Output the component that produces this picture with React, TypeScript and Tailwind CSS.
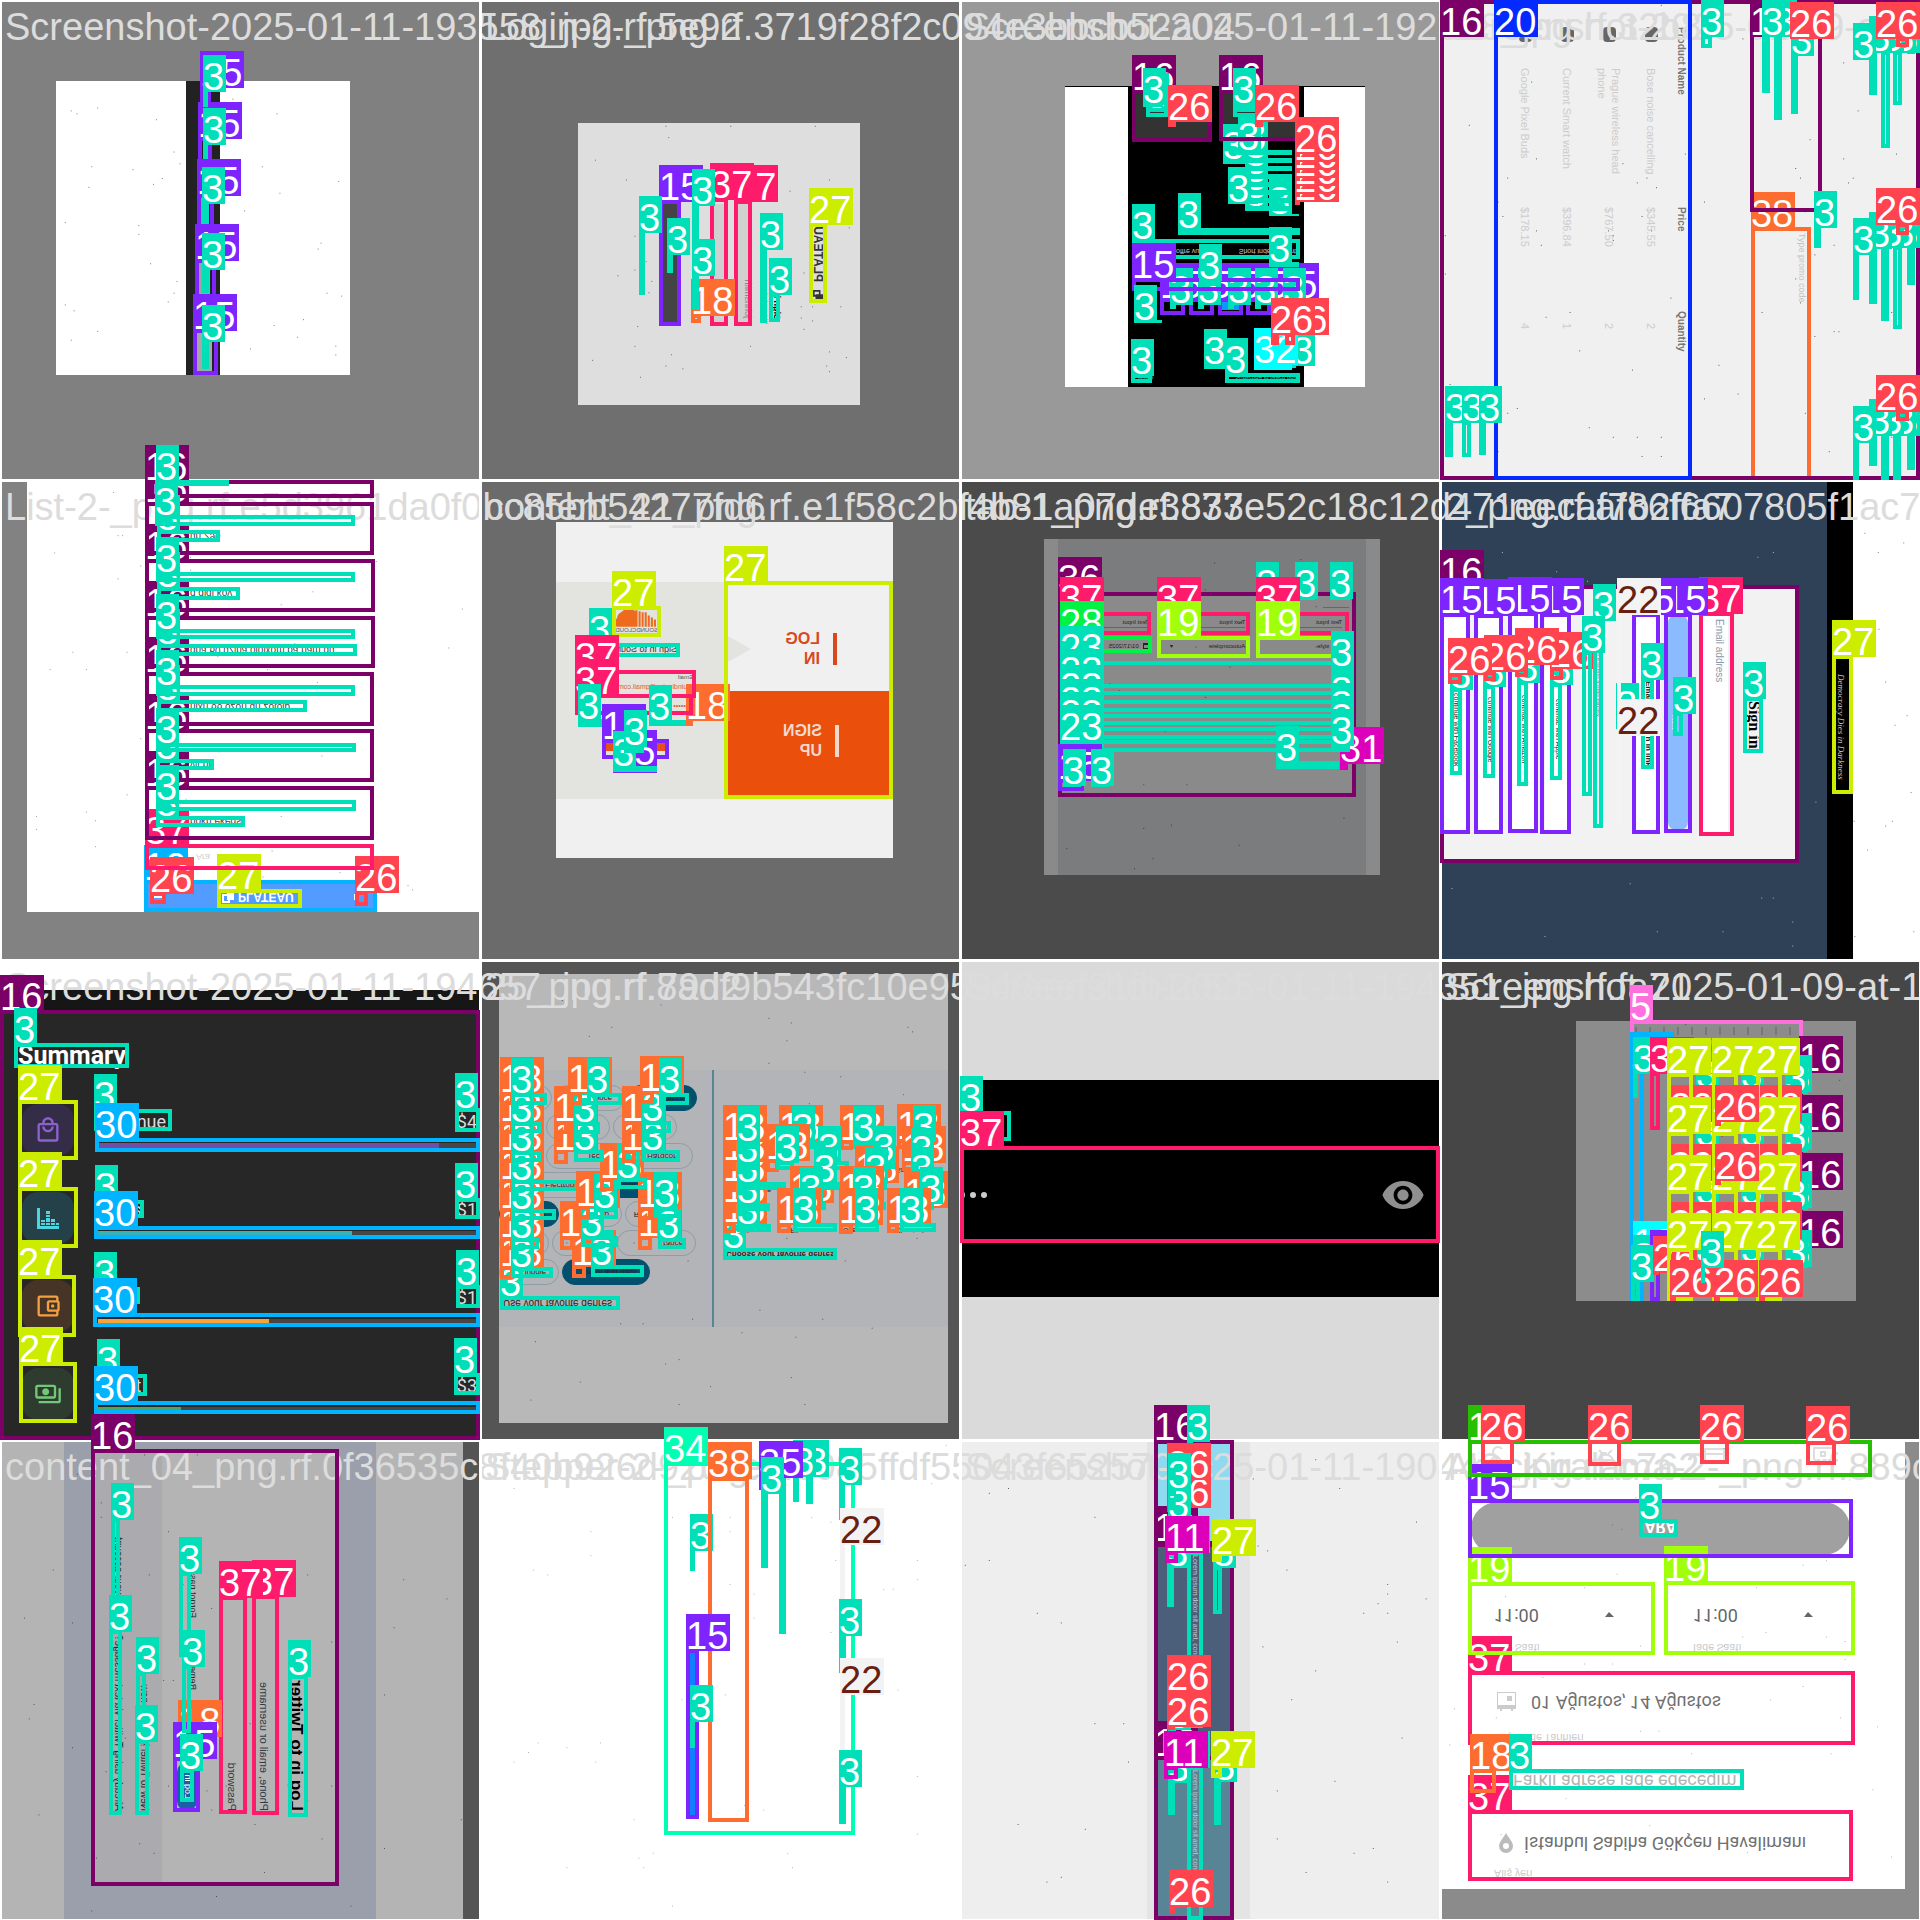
import type { ReactNode } from "react";
import {
  MdOutlineAccountBalanceWallet,
  MdOutlineLocalMall,
  MdOutlinePayments,
} from "react-icons/md";

type Box = [cls: number, x: number, y: number, w: number, h: number];

const TILE = 480;
const pct = (v: number) => `${(v / TILE) * 100}%`;

const FILL = [
  "bg-[#042aff]", "bg-[#0bdbeb]", "bg-[#f3f3f3]", "bg-[#00dfb7]", "bg-[#111f68]",
  "bg-[#ff6fdd]", "bg-[#ff444f]", "bg-[#cced00]", "bg-[#00f344]", "bg-[#bd00ff]",
  "bg-[#00b4ff]", "bg-[#dd00ba]", "bg-[#00ffff]", "bg-[#26c000]", "bg-[#01ffb3]",
  "bg-[#7d24ff]", "bg-[#7b0068]", "bg-[#ff1b6c]", "bg-[#fc6d2f]", "bg-[#a2ff0b]",
];
const LINE = [
  "border-[#042aff]", "border-[#0bdbeb]", "border-[#f3f3f3]", "border-[#00dfb7]", "border-[#111f68]",
  "border-[#ff6fdd]", "border-[#ff444f]", "border-[#cced00]", "border-[#00f344]", "border-[#bd00ff]",
  "border-[#00b4ff]", "border-[#dd00ba]", "border-[#00ffff]", "border-[#26c000]", "border-[#01ffb3]",
  "border-[#7d24ff]", "border-[#7b0068]", "border-[#ff1b6c]", "border-[#fc6d2f]", "border-[#a2ff0b]",
];

/** Sensor-like specks scattered over a picture. */
function Specks({ seed, n = 26, c = "fill-black/50" }: { seed: number; n?: number; c?: string }) {
  let s = seed * 7919 + 13;
  const next = () => {
    s = (s * 1103515245 + 12345) % 2147483648;
    return s / 2147483648;
  };
  const dots = Array.from({ length: n }, () => [Math.round(next() * 98), Math.round(next() * 98)]);
  return (
    <svg aria-hidden className={`pointer-events-none absolute inset-0 size-full ${c}`}>
      {dots.map(([a, b], i) => (
        <rect key={i} x={`${a}%`} y={`${b}%`} width="1" height="1" />
      ))}
    </svg>
  );
}

function PlateauMark({ c }: { c: string }) {
  return (
    <svg viewBox="0 0 12 12" className={c} fill="currentColor" aria-hidden>
      <path d="M0 0h8v3h4v9H5V9H0z M2 2v5h3V3h1V2z" fillRule="evenodd" />
    </svg>
  );
}

/* ---------- pictures ---------- */

const P1 = () => (
  <div className="h-full bg-[#808080] pt-[81px] pl-[56px]">
    <div className="relative h-[294px] w-[294px] bg-white">
      <Specks seed={1} n={44} />
      <div className="relative ml-[130px] flex h-full w-[34px] flex-col items-center bg-[#222222] pt-[117px]">
        <div className="h-7 w-[10px] bg-[#999999]" />
        <div className="mt-[37px] h-[31px] w-[13px] bg-[#a0a0a0]" />
        <div className="mt-[39px] h-[38px] w-[17px] bg-[#a6a6a6]" />
      </div>
    </div>
  </div>
);

const P2 = () => (
  <div className="h-full bg-[#6f6f6f] pt-[123px] pl-[98px]">
    <div className="relative size-[282px] bg-[#dedede]">
      <Specks seed={3} n={40} />
      <div className="size-full -scale-y-100 pt-[81px] pr-[36px] leading-none [writing-mode:vertical-rl]">
        <h3 className="flex w-3 items-center gap-2 pt-6 text-[12px] font-bold text-[#333333]">
          <PlateauMark c="size-[10px] -rotate-90" />
          PLATEAU
        </h3>
        <h4 className="mr-[31px] w-[10px] pt-1 text-[9px] font-bold text-black">Sign in to</h4>
        <p className="mr-[3px] w-[6px] text-[5px] text-[#888888]">Welcome back</p>
        <p className="mr-[10px] h-[120px] w-[14px] bg-[#d0d0d0] pt-[6px] text-[9px] text-[#888888]">johnsmith</p>
        <p className="mr-[10px] h-[120px] w-[14px] bg-[#d0d0d0]" />
        <button type="button" aria-label="Sign in" className="mr-[33px] h-[122px] w-[18px] bg-[#444444]" />
      </div>
    </div>
  </div>
);

const P3 = () => (
  <div className="h-full bg-[#999999] pt-[86px] pl-[105px]">
    <div className="h-[301px] w-[300px] border-t border-black bg-white pl-[63px]">
      <div className="h-full w-[176px] bg-black">
        <div className="flex gap-3 px-1.5 pt-[5px]">
          <div className="h-12 w-[76px] bg-[#333333]" />
          <div className="h-12 w-[76px] bg-[#333333]" />
        </div>
        <p className="mt-[105px] flex h-[10px] -scale-y-100 justify-between gap-4 pr-2 pl-[48px] text-[7px] leading-none whitespace-nowrap text-[#cccccc]">
          <span>offre vue</span>
          <span>Short independent</span>
        </p>
        <div className="mt-[46px] ml-[93px] h-[9px] w-[18px] bg-[#0a9aff]" />
        <p className="mt-[65px] flex -scale-y-100 justify-between px-1.5 text-[6px] leading-none text-[#00dfb7]">
          <span>Fidélité</span>
          <span>Subscribe to reach now</span>
        </p>
      </div>
    </div>
  </div>
);

const GOODS = [
  ["Bose noise cancelling", "$345.55", "2"],
  ["Prague wireless head phone", "$767.50", "2"],
  ["Current Smart watch", "$396.84", "1"],
  ["Google Pixel Buds", "$178.15", "4"],
];

const P4 = () => (
  <div className="relative flex h-full flex-row-reverse bg-[#f0f0f0] pt-[27px]">
    <Specks seed={5} n={70} c="fill-black/60" />
    <label className="mt-[206px] w-[124px] pr-[114px] text-[9px] leading-none whitespace-nowrap text-[#c4c4c4] [writing-mode:vertical-rl]">
      Type promo code
    </label>
    <div className="mr-[106px] w-[190px] [writing-mode:vertical-rl]">
      <table className="text-left text-[11px] text-[#cccccc]">
        <thead className="text-[10px] text-[#777777]">
          <tr className="w-[18px]">
            <th className="h-[180px] font-bold whitespace-nowrap" colSpan={2}>Product Name</th>
            <th className="h-[104px] font-bold">Price</th>
            <th className="h-[90px] font-bold">Quantity</th>
          </tr>
        </thead>
        <tbody>
          {GOODS.map(([name, price, n]) => (
            <tr key={name} className="w-[42px]">
              <td className="h-[41px]"><div className="h-[15px] w-[13px] rounded-sm bg-[#666666]" /></td>
              <td className="h-[139px]"><div className="h-[110px] leading-[14px]">{name}</div></td>
              <td>{price}</td>
              <td className="pt-[12px]">{n}</td>
            </tr>
          ))}
        </tbody>
      </table>
    </div>
  </div>
);

const LIST = [
  "nokn ekeds", "vit bi", "nixn 66 ozon un zotoib",
  "dna 60 uzina ololxom pa nam du", "g qiqi kov", "un 296",
];

const P5 = () => (
  <div className="h-full bg-[#828282] pl-[27px]">
    <div className="relative h-[432px] -scale-y-100 bg-white">
      <Specks seed={6} n={50} c="fill-black/40" />
      <div className="ml-[119px] w-[229px] leading-none">
        <header className="flex h-[30px] items-center bg-[#529bff] px-2 text-[12px] font-bold text-white">
          <span className="h-[3px] w-2 bg-white" />
          <PlateauMark c="mr-1 ml-[60px] size-3" />
          PLATEAU
          <span className="mr-2 ml-auto h-[6px] w-[5px] bg-white" />
        </header>
        <p className="h-[42px] pt-[21px] pl-[50px] text-[9px] text-[#cccccc]">Ara</p>
        <ul>
          {LIST.map((s) => (
            <li key={s} className="h-[57px] pt-[14px] pl-[44px] text-[10px] text-[#444444]">
              {s}
              <div className="mt-2 mr-6 border-t border-dotted border-[#bbbbbb]" />
            </li>
          ))}
        </ul>
      </div>
    </div>
  </div>
);

const P6 = () => (
  <div className="h-full bg-[#6b6b6b] pt-[42px] pl-[76px]">
    <div className="h-[336px] w-[337px] -scale-x-100 bg-[#f0f0f0] pt-[60px]">
      <div className="flex h-[217px] leading-none">
        <div className="flex w-[166px] flex-col text-[16px] leading-5 font-bold">
          <div className="flex h-[109px] items-center gap-[13px] pt-6 pl-[56px] text-[#d9481c]">
            <span className="h-8 w-1 bg-[#d9481c]" />
            <span className="w-[56px]">LOG<br />IN</span>
            <svg viewBox="0 0 23 26" className="h-[26px] w-[23px] shrink-0 fill-[#e3e3df]" aria-hidden><path d="M23 0L0 13L23 26z" /></svg>
          </div>
          <div className="flex flex-1 items-center gap-[13px] bg-[#ea4f0c] pb-2 pl-[54px] text-[#f3d8cc]">
            <span className="h-8 w-1 bg-[#f3d8cc]" />
            <span>SIGN<br />UP</span>
          </div>
        </div>
        <form className="flex-1 bg-[#e3e3df] pt-[27px] pl-[34px] text-[#555555]">
          <svg viewBox="0 0 42 17" className="ml-[35px] h-[18px] w-[43px] -scale-x-100 fill-[#ee6a1d]" aria-hidden>
            <path d="M20 17H4a4 4 0 01-2-8 7 7 0 014-6 10 10 0 0114-1z M20 1h2v16h-2z M23 2h2v15h-2z M26 3h2v14h-2z M29 3h2v14h-2z M32 6h2v11h-2z M35 8h2v9h-2z M38 10h2v7h-2z" />
          </svg>
          <p className="ml-[35px] text-[6px]">SOUNDCLOUD</p>
          <p className="mt-[12px] ml-[16px] text-[9px] whitespace-nowrap text-[#333333]">Sign in to Soun</p>
          <label htmlFor="sc-email" className="mt-5 block text-[6px]">Email</label>
          <input id="sc-email" readOnly defaultValue="thuindicator@gmail.com" className="mt-0.5 block h-2 w-24 bg-transparent text-[7px] leading-none text-[#d9603c]" />
          <p className="mt-3 text-[7px] text-[#d9603c]">••••••••</p>
          <button type="button" aria-label="Sign in" className="mt-[30px] ml-[28px] block h-3 w-[59px] bg-[#e8501a]" />
        </form>
      </div>
    </div>
  </div>
);

const P7 = () => (
  <div className="h-full bg-[#4b4b4b] pt-[59px] pl-[84px]">
    <div className="size-[336px] -scale-x-100 bg-[#8a8a8a] px-[14px]">
      <div className="relative h-full bg-[#7b7c7e] pt-[53px] pl-[10px]">
        <Specks seed={8} n={30} />
        <div className="h-[205px] bg-[#8a8a8a] px-[7px] pt-[15px] text-[6px] leading-none text-[#222222]">
          <div className="h-[5px] w-[26px] border-t border-[#62666e]" />
          <div className="grid grid-cols-3 gap-x-1.5">
            {["a", "b", "c"].map((k) => (
              <p key={k} className="h-[23px] pt-[7px] pl-[7px]">
                Text Input
                <span className="mt-0.5 mr-3 block border-t border-[#666666]" />
              </p>
            ))}
            <p className="flex pt-2 pl-[7px]">Text style</p>
            <p className="flex justify-between pt-2 pr-2 pl-[7px]">Autocomplete <span>▾</span></p>
            <p className="flex gap-1 pt-2 pl-[7px]">
              <span className="size-[6px] border border-t-2 border-[#222222]" />
              01/17/2025
            </p>
          </div>
        </div>
      </div>
    </div>
  </div>
);

const PROVIDERS = ["Apple", "Amazon", "Google", "Facebook"];

const P8 = () => (
  <div className="flex h-full">
    <div className="relative w-[387px] bg-[#2f4157] pt-[109px]">
      <Specks seed={9} n={40} c="fill-white/60" />
      <div className="relative h-[272px] w-[357px] bg-[#f2f2f3] pt-[26px] pr-[35px] leading-none [writing-mode:vertical-rl]">
        <h3 className="w-[18px] pt-[86px] font-['Liberation_Serif'] text-[16px] font-bold text-black">Sign in</h3>
        <label className="mr-[16px] block h-[217px] w-[27px] bg-white pt-1 pr-[4px] text-[10px] text-[#8d96a8]">Email address</label>
        <button type="button" className="mr-[13px] block h-[215px] w-[20px] rounded-lg bg-[#8bbaff] pr-2 text-[7px] text-white">Next</button>
        <button type="button" className="mr-[7px] block h-[217px] w-[27px] bg-white text-[8px] font-bold text-[#222222]">Email me a sign in link</button>
        <p className="mr-[34px] w-[6px] text-[4px] text-[#666666]">By signing in you agree to our terms of service and policy</p>
        <div className="mr-[22px] flex w-[130px] flex-col gap-[7px]">
          {PROVIDERS.map((p) => (
            <button key={p} type="button" className="block h-[217px] w-[27px] bg-white pt-3 text-[7px] text-[#222222]">continue with {p}</button>
          ))}
        </div>
      </div>
    </div>
    <div className="w-[26px] bg-black pt-[194px] pr-[8px] font-['Liberation_Serif'] text-[9px] leading-none text-[#cccccc] italic [writing-mode:vertical-rl]">
      Democracy Dies in Darkness
    </div>
    <div className="relative flex-1 bg-white"><Specks seed={10} n={14} /></div>
  </div>
);

const SUMMARY = [
  { name: "Revenue", value: "$4", tone: "bg-[#332d48] text-[#8d62cf]", bar: "bg-[#7050a5] w-[90%]", icon: <MdOutlineLocalMall className="size-7" /> },
  {
    name: "Sales", value: "$1", tone: "bg-[#24414a] text-[#4fd3de]", bar: "bg-[#36b3b9] w-[67%]",
    icon: (
      <svg viewBox="0 0 24 24" className="size-6" fill="currentColor" aria-hidden>
        <path d="M1 2h3v18h19v3H1z M5 14h4v2H5z M5 17h4v2H5z M10 9h4v2h-4z M10 12h4v4h-4z M10 17h4v2h-4z M15 13h4v3h-4z M15 17h4v2h-4z M20 17h3v2h-3z M10 5h4v3h-4z" />
      </svg>
    ),
  },
  { name: "Cost", value: "$1", tone: "bg-[#463526] text-[#f5a040]", bar: "bg-[#f5a33c] w-[45%]", icon: <MdOutlineAccountBalanceWallet className="size-7" /> },
  { name: "Profit", value: "$3", tone: "bg-[#2d3c2e] text-[#74c778]", bar: "bg-[#54a35c] w-[22%]", icon: <MdOutlinePayments className="size-7" /> },
];

const P9 = () => (
  <div className="h-full bg-[#272727] font-[Roboto] text-[#dddddd]">
    <div className="h-[30px] bg-white" />
    <div className="h-5 bg-[#161616]" />
    <h3 className="h-[94px] pt-[34px] pl-[18px] text-[25px] leading-6 font-bold text-white">Summary</h3>
    <ul>
      {SUMMARY.map((s) => (
        <li key={s.name} className="flex h-[88px] gap-6 pr-[3px] pl-[22px]">
          <div className={`grid size-[52px] place-items-center rounded-2xl ${s.tone}`}>{s.icon}</div>
          <div className="flex-1 pt-[7px]">
            <div className="flex h-8 justify-between text-[18px] leading-[22px]">
              <span>{s.name}</span>
              <span>{s.value}</span>
            </div>
            <div className="h-[5px] bg-[#464646]"><div className={`h-full ${s.bar}`} /></div>
          </div>
        </li>
      ))}
    </ul>
  </div>
);

const DARK = "bg-[#024f6e] border-[#024f6e]";
const PILLS: { t: string; w: string; dark?: boolean }[][] = [
  [{ t: "Jungle", w: "w-[60px]" }, { t: "Drum and bass", w: "w-[88px]", dark: true }],
  [{ t: "House", w: "w-[50px]" }, { t: "Dub", w: "w-[62px]" }, { t: "Trance", w: "w-[79px]" }],
  [{ t: "Metal", w: "w-[60px]", dark: true }, { t: "Rap", w: "w-[60px]" }, { t: "Rock", w: "w-[40px]" }],
  [{ t: "Electronic", w: "w-[94px]" }, { t: "Ambient", w: "w-[62px]", dark: true }],
  [{ t: "Pop", w: "w-[44px]" }, { t: "Techno", w: "w-[80px]" }, { t: "Hardcore", w: "w-[64px]" }],
  [{ t: "Folk", w: "w-[44px]" }, { t: "Jazz", w: "w-[64px]" }, { t: "Soul", w: "w-[64px]" }],
  [{ t: "Blues", w: "w-[53px]" }, { t: "Dance", w: "w-[70px]" }, { t: "Disco", w: "w-[69px]", dark: true }],
];
const GENRES = ["Action", "Film score", "Opera", "Classical", "Country", "Latin", "Indie", "Punk", "Alternative", "Gospel", "Swing", "Ska", "Reggae", "Funk", "Choir", "Samba"];

const P10 = () => (
  <div className="h-full bg-[#555555] pt-[14px] pr-3 pl-[19px]">
    <div className="relative h-[449px] -scale-y-100 bg-[#b8b8b8] pt-[96px] leading-none text-[#222222]">
      <Specks seed={12} n={60} />
      <div className="flex h-[257px] bg-[#b2b4b7]">
        <div className="w-[213px]">
          <h4 className="h-[42px] pt-[19px] pl-1 text-[10px]">Use your favorite genres</h4>
          {PILLS.map((r, i) => (
            <div key={i} className="mb-[3px] flex gap-[3px]">
              {r.map((p) => (
                <span key={p.t} className={`h-[26px] rounded-full border pt-2 pr-3 text-right text-[8px] ${p.w} ${p.dark ? DARK : "border-[#8e9da6]"}`}>{p.t}</span>
              ))}
            </div>
          ))}
        </div>
        <div className="w-0.5 bg-[#5c8390]" />
        <div className="flex-1 pt-[69px]">
          <h4 className="pl-3 text-[8px] font-bold">Choose your favorite genres</h4>
          <div className="mt-4 grid grid-cols-4 gap-y-[13px] pl-6 text-[7px]">
            {GENRES.map((g) => <span key={g}>{g}</span>)}
          </div>
        </div>
      </div>
    </div>
  </div>
);

const P11 = () => (
  <div className="h-full bg-[#dadada] pt-[120px]">
    <div className="flex h-[217px] items-center justify-between bg-black pt-3 pr-[15px] pl-[1px]">
      <span className="flex gap-[5px]">
        <i className="h-1.5 w-1 rounded-full bg-[#bbbbbb]" />
        <i className="size-1.5 rounded-full bg-[#cccccc]" />
        <i className="size-1.5 rounded-full bg-[#cccccc]" />
      </span>
      <button type="button" aria-label="Show password">
        <svg viewBox="1 4 22 16" className="h-[30px] w-11 fill-[#8f8f8f]" aria-hidden>
          <path d="M12 4.500C7 4.500 2.730 7.610 1 12c1.730 4.390 6 7.500 11 7.500s9.270-3.110 11-7.500c-1.730-4.390-6-7.500-11-7.500zM12 17c-2.760 0-5-2.240-5-5s2.240-5 5-5 5 2.240 5 5-2.240 5-5 5zm0-8c-1.660 0-3 1.340-3 3s1.340 3 3 3 3-1.340 3-3-1.340-3-3-3z" />
        </svg>
      </button>
    </div>
  </div>
);

const P12 = () => (
  <div className="h-full bg-[#464646] pt-[61px] pl-[136px]">
    <div className="relative flex size-[280px] gap-[12px] bg-[#8c8c8c] pt-[6px] pl-[59px]">
      <Specks seed={14} n={10} />
      {Array.from({ length: 12 }, (_, i) => (
        <span key={i} className="h-2 w-0.5 bg-[#777777]" />
      ))}
    </div>
  </div>
);

const P13 = () => (
  <div className="relative flex h-full bg-[#b4b4b4]">
    <div className="w-16" />
    <div className="w-[312px] bg-[#9a9fab] pt-[11px] pl-[29px]">
      <div className="h-[433px] w-[244px] -scale-y-100 bg-[linear-gradient(to_right,#aaaaaf_69px,#b4b4b4_69px)] pt-[73px] pr-[32px] leading-none [writing-mode:vertical-rl]">
        <h3 className="w-[18px] text-[17px] font-bold whitespace-nowrap text-black">Log in to Twitter</h3>
        <label className="mr-[11px] block w-[24px] pr-[7px] text-[11px] whitespace-nowrap text-[#333a45]">Phone, email or username</label>
        <label className="mr-[8px] block w-[24px] pr-[7px] text-[11px] whitespace-nowrap text-[#333a45]">Password</label>
        <div className="mr-[23px] flex h-[260px] w-[20px] gap-3 text-[9px] whitespace-nowrap text-[#113333]">
          <button type="button" className="h-[52px] w-[20px] rounded-full bg-[#1c5ea8] text-white">Log in</button>
          <span className="pt-[60px]">Remember me</span>
          <span>Forgot password</span>
        </div>
        <p className="mr-[28px] w-[13px] text-[10px] whitespace-nowrap text-[#113333]">New to Twitter? Sign up now</p>
        <p className="mr-[13px] w-[12px] text-[10px] whitespace-nowrap text-[#113333]">Already using Twitter via text message? Activate your account</p>
      </div>
    </div>
    <div className="flex-1" />
    <div className="w-[17px] bg-[#545454]" />
    <Specks seed={15} n={60} />
  </div>
);

const P14 = () => (
  <div className="relative h-full bg-white pt-[212px] pl-[208px]">
    <Specks seed={16} n={50} c="fill-black/30" />
    <div className="h-[165px] w-[9px] bg-[#0f80ff]" />
  </div>
);

const P15 = () => (
  <div className="relative h-full bg-[#eeeeee] pl-[187px]">
    <Specks seed={17} n={60} c="fill-black/60" />
    <div className="relative flex h-full w-[103px] flex-col bg-[#e4e4e5] pr-[18px] pl-[9px] text-[7px] leading-[7px] text-[#c2c8cf]">
      <div className="h-[105px] bg-[#8fdaee]" />
      <p className="h-[215px] bg-[#4c5f7a] pt-[10px] pr-[33px] [writing-mode:vertical-rl]">Lorem ipsum dolor sit amet, consectetur adipiscing</p>
      <p className="flex-1 bg-[#588595] pt-[10px] pr-[33px] [writing-mode:vertical-rl]">Lorem ipsum dolor sit amet, consectetur</p>
    </div>
  </div>
);

const P16 = () => (
  <div className="h-full bg-[#8b8b8b] pr-[15px]">
    <form className="relative flex h-[449px] -scale-y-100 flex-col bg-white pt-[10px] pl-[54px] font-[Roboto] text-[11px] leading-3 text-[#cccccc]">
      <Specks seed={18} n={50} c="fill-black/30" />
      <label htmlFor="place">Alış yeri</label>
      <div className="mt-3 flex h-6 items-center gap-[11px] pl-[5px]">
        <svg viewBox="0 0 14 20" className="h-5 w-[14px] fill-[#bbbbbb]" fillRule="evenodd" aria-hidden>
          <path d="M7 20C5 16 0 11 0 7a7 7 0 0114 0C14 11 9 16 7 20z M7 10a3 3 0 000-6a3 3 0 000 6z" />
        </svg>
        <input id="place" readOnly defaultValue="İstanbul Sabiha Gökçen Havalimanı" className="h-6 w-80 bg-transparent text-[18px] leading-6 text-[#707070]" />
      </div>
      <label className="mt-[38px] flex h-6 items-center pl-[19px] text-[18px] leading-6 text-[#b4b4b4]">Farklı adrese iade edeceğim</label>
      <label htmlFor="dates" className="mt-[26px]">Alış - İade Tarihleri</label>
      <div className="mt-[17px] flex h-6 items-center gap-[15px] pl-[3px]">
        <svg viewBox="0 0 19 19" className="size-[19px] fill-[#cccccc]" aria-hidden>
          <path d="M0 2h3V0h2v2h9V0h2v2h3v17H0z M1 6v12h17V6z M10 10h5v5h-5z" fillRule="evenodd" />
        </svg>
        <input id="dates" readOnly defaultValue="01 Ağustos, 14 Ağustos" className="h-6 w-64 bg-transparent text-[18px] leading-6 text-[#707070]" />
      </div>
      <div className="mt-[37px] flex gap-[79px]">
        {["Alış Saati", "İade Saati"].map((s) => (
          <div key={s} className="w-[120px]">
            <label htmlFor={s}>{s}</label>
            <div className="mt-[14px] flex h-6 items-center justify-between text-[#666666]">
              <select id={s} className="h-6 w-20 appearance-none bg-transparent text-[18px] leading-6"><option>11:00</option></select>
              <svg viewBox="0 0 9 5" className="h-[5px] w-[9px]" fill="currentColor" aria-hidden><path d="M0 0h9L4 5z" /></svg>
            </div>
          </div>
        ))}
      </div>
      <button type="button" className="mt-12 -ml-[23px] h-[53px] w-[379px] rounded-full bg-[#a0a0a0] pt-[2px] text-[16px] font-bold text-white">ARA</button>
      <nav className="mt-[38px] -ml-2 flex gap-[88px]">
        {["M3 2l6 6M9 8a5 5 0 107 7M16 3l-5 5", "M3 4a8 8 0 0015 0M4 14l4-4M17 14l-4-4", "M1 2h19v13H1zM1 10h19", "M1 16h19V5l-6-4H7L1 5zM8 8h4v4H8z"].map((d) => (
          <svg key={d} viewBox="0 0 21 18" className="h-[18px] w-[21px] fill-none stroke-[#dddddd]" strokeWidth="2" aria-hidden><path d={d} /></svg>
        ))}
      </nav>
    </form>
  </div>
);

/* ---------- annotations ---------- */

const row = (cls: number, ys: number[], x: number, w: number, h: number): Box[] =>
  ys.map((y) => [cls, x, y, w, h]);

const TILES: { name: string; Pic: () => ReactNode; boxes: Box[] }[] = [
  {
    name: "Screenshot-2025-01-11-193558_jpg.rf.5e92", Pic: P1,
    boxes: [
      [15, 200, 86, 11, 25], [15, 198, 137, 14, 28], [15, 197, 194, 17, 34], [15, 195, 259, 21, 40], [15, 193, 329, 25, 46],
      [3, 203, 90, 5, 17], [3, 203, 143, 5, 16], [3, 202, 202, 7, 22], [3, 202, 268, 7, 25], [3, 202, 340, 7, 29],
    ],
  },
  {
    name: "Login-2-_png.rf.3719f28f2c094e3bbcb52a04", Pic: P2,
    boxes: [
      [37, 254, 200, 18, 126], [37, 230, 198, 18, 128], [15, 179, 200, 22, 126], [18, 211, 314, 10, 9],
      [3, 159, 231, 6, 64], [3, 187, 253, 6, 20], [3, 212, 204, 7, 40], [3, 212, 274, 7, 36],
      [3, 280, 248, 7, 75], [3, 289, 293, 11, 29], [27, 329, 223, 18, 80],
    ],
  },
  {
    name: "Screenshot-2025-01-11-192328_jpg.rf.32b8", Pic: P3,
    boxes: [
      [3, 309, 214, 30, 2], [3, 285, 206, 45, 5],
      ...row(3, [198, 190, 182, 174, 166, 158, 150], 285, 47, 5),
      [3, 268, 202, 30, 2], [3, 263, 159, 22, 5], [3, 278, 150, 22, 5],
      [16, 259, 90, 80, 51], [16, 172, 90, 80, 52],
      [3, 186, 108, 22, 9], [3, 183, 103, 20, 4], [3, 273, 108, 28, 9], [3, 273, 103, 20, 5],
      [26, 295, 120, 8, 7], [26, 208, 120, 8, 7],
      ...row(26, [200, 192, 184, 176, 168, 160, 152], 335, 5, 5),
      [3, 172, 239, 168, 20], [3, 218, 228, 122, 7],
      [15, 315, 298, 25, 17], [15, 286, 298, 25, 17], [15, 258, 298, 25, 17], [15, 229, 298, 25, 17], [15, 200, 298, 25, 17],
      [3, 210, 303, 6, 6], [3, 238, 303, 6, 6], [3, 268, 303, 6, 6], [3, 295, 303, 6, 6], [3, 323, 303, 6, 6],
      [15, 172, 278, 168, 13], [3, 174, 320, 28, 3], [3, 309, 262, 30, 5], [3, 239, 279, 22, 7],
      [3, 171, 374, 21, 9], [3, 244, 364, 22, 5], [3, 332, 364, 4, 4], [3, 265, 373, 75, 10], [32, 294, 363, 38, 7],
      [26, 325, 333, 10, 12], [26, 311, 333, 8, 12],
    ],
  },
  {
    name: "Screenshot-2025-01-09-at-1", Pic: P4,
    boxes: [
      [38, 311, 227, 60, 253], [16, 0, 0, 480, 480], [16, 310, 0, 72, 212], [20, 54, 0, 198, 480],
      [3, 261, 35, 11, 13], [3, 351, 54, 7, 60], [3, 334, 35, 8, 85], [3, 322, 35, 8, 58], [26, 350, 37, 6, 2],
      [3, 467, 51, 8, 3], [3, 453, 51, 9, 54], [3, 441, 51, 9, 97], [3, 429, 51, 8, 44], [3, 413, 58, 6, 2],
      [3, 467, 246, 8, 39], [3, 453, 246, 9, 83], [3, 441, 246, 8, 75], [3, 429, 247, 8, 57], [3, 413, 253, 6, 47],
      [3, 467, 434, 8, 36], [3, 453, 434, 8, 46], [3, 441, 434, 8, 46], [3, 429, 434, 8, 32], [3, 413, 441, 6, 39],
      [26, 456, 37, 13, 10], [26, 456, 223, 13, 12], [26, 456, 410, 13, 11], [3, 374, 226, 7, 22],
      [3, 5, 421, 8, 36], [3, 22, 421, 9, 36], [3, 39, 421, 7, 34],
    ],
  },
  {
    name: "List-2-_png.rf.e5d3961da0f0bc85bb54277fd6", Pic: P5,
    boxes: [
      [10, 144, 400, 233, 32], [27, 217, 409, 85, 19], [26, 150, 412, 16, 12], [26, 355, 411, 13, 15], [37, 145, 364, 229, 26],
      [16, 145, 306, 229, 54], [16, 145, 249, 229, 53], [16, 145, 192, 229, 54], [16, 145, 136, 230, 52],
      [16, 145, 79, 230, 53], [16, 145, 22, 229, 53], [16, 145, 0, 229, 18],
      [3, 156, 336, 89, 11], [3, 156, 320, 200, 11], [3, 156, 279, 58, 11], [3, 156, 263, 200, 9],
      [3, 157, 220, 150, 12], [3, 156, 205, 199, 11], [3, 157, 164, 200, 12], [3, 156, 149, 199, 10],
      [3, 157, 107, 83, 13], [3, 156, 92, 199, 10], [3, 157, 50, 63, 12], [3, 155, 35, 200, 11], [3, 156, 0, 73, 6],
    ],
  },
  {
    name: "content_21_png.rf.e1f58c2bf4b81a07de3877", Pic: P6,
    boxes: [
      [18, 206, 239, 7, 7], [27, 244, 101, 169, 218], [27, 132, 126, 49, 31], [3, 109, 163, 91, 14],
      [37, 95, 190, 121, 28], [37, 95, 214, 118, 21], [3, 169, 240, 37, 6], [3, 98, 239, 24, 8],
      [15, 122, 259, 67, 20], [15, 133, 285, 44, 8], [3, 133, 286, 44, 6], [3, 144, 265, 20, 8],
    ],
  },
  {
    name: "tab-1_png.rf.833e52c18c12d471eecaf7b2ffa7", Pic: P7,
    boxes: [
      [36, 98, 112, 298, 205], [3, 296, 117, 20, 4], [3, 335, 117, 20, 3], [3, 370, 117, 20, 3],
      [37, 100, 132, 91, 23], [37, 197, 132, 93, 23], [37, 296, 132, 93, 23],
      [28, 100, 156, 92, 17], [19, 197, 156, 93, 22], [19, 296, 156, 93, 22],
      ...row(23, [268, 255, 241, 228, 211], 100, 282, 4),
      ...row(23, [181, 204, 220, 234, 247, 260], 100, 282, 4),
      [31, 380, 282, 8, 8], [3, 316, 281, 63, 8],
      [3, 371, 186, 23, 5], [3, 371, 224, 23, 5], [3, 371, 238, 23, 5], [3, 371, 251, 23, 5], [3, 371, 264, 19, 8],
      [15, 98, 299, 26, 12], [3, 103, 304, 18, 3], [3, 131, 304, 18, 3],
    ],
  },
  {
    name: "2_png.rf.af86f6607805f1ac7", Pic: P8,
    boxes: [
      [16, 0, 105, 359, 278], [37, 259, 132, 35, 224],
      [15, 224, 133, 28, 220], [15, 192, 133, 28, 221], [15, 100, 133, 31, 221], [15, 68, 132, 30, 221], [15, 34, 134, 29, 220], [15, 0, 133, 30, 221],
      [3, 110, 203, 12, 97], [3, 77, 201, 11, 105], [3, 43, 205, 12, 93], [3, 10, 208, 12, 87],
      [26, 110, 187, 13, 13], [26, 75, 183, 13, 14], [26, 44, 190, 12, 11], [26, 8, 193, 14, 11],
      [3, 153, 139, 10, 209], [3, 142, 171, 10, 145], [3, 176, 238, 2, 11], [3, 201, 198, 13, 91], [3, 233, 232, 10, 24],
      [22, 177, 133, 4, 100], [22, 177, 254, 4, 90], [3, 303, 217, 20, 56], [27, 392, 175, 21, 139],
    ],
  },
  {
    name: "Screenshot-2025-01-11-194657_jpg.rf.79d2", Pic: P9,
    boxes: [
      [16, 0, 50, 480, 430], [3, 14, 83, 115, 25], [3, 94, 149, 78, 22], [3, 95, 240, 49, 18], [3, 94, 327, 46, 17], [3, 97, 414, 50, 22],
      [3, 455, 148, 25, 24], [3, 455, 238, 25, 21], [3, 456, 325, 24, 23], [3, 454, 413, 26, 22],
      [30, 95, 178, 385, 14], [30, 94, 266, 386, 13], [30, 93, 353, 387, 14], [30, 94, 441, 386, 13],
      [27, 18, 140, 60, 60], [27, 18, 227, 60, 61], [27, 18, 315, 58, 62], [27, 19, 402, 58, 61],
    ],
  },
  {
    name: "25_png.rf.8adf9b543fc10e95946eef31fb1c5d", Pic: P10,
    boxes: [
      [3, 20, 336, 120, 14],
      ...row(18, [306, 277, 248, 219, 190, 161, 132], 20, 14, 13),
      [3, 31, 307, 42, 11], [3, 31, 278, 28, 11], [3, 31, 249, 45, 11], [3, 31, 220, 68, 11], [3, 31, 191, 30, 11], [3, 31, 162, 30, 11], [3, 31, 133, 36, 12],
      [18, 92, 305, 14, 13], [3, 111, 305, 53, 12], [18, 80, 276, 14, 14], [3, 101, 276, 37, 11],
      [18, 158, 276, 14, 14], [3, 178, 278, 28, 11], [18, 158, 247, 14, 13], [3, 174, 247, 24, 11],
      [18, 96, 246, 14, 13], [3, 114, 248, 24, 11], [18, 120, 218, 14, 13], [3, 137, 218, 30, 11],
      [18, 142, 190, 14, 13], [3, 162, 190, 38, 12], [18, 74, 190, 14, 14], [3, 94, 190, 30, 12],
      [18, 142, 161, 14, 13], [3, 162, 161, 29, 12], [18, 74, 161, 14, 13], [3, 94, 162, 26, 12],
      [18, 160, 131, 14, 13], [3, 179, 133, 30, 12], [18, 88, 132, 14, 13], [3, 107, 133, 35, 12],
      [3, 243, 288, 114, 12],
      ...row(18, [262, 242, 221, 200, 180], 243, 13, 11),
      [3, 257, 264, 34, 8], [3, 257, 243, 33, 8], [3, 257, 222, 49, 8], [3, 257, 202, 20, 8], [3, 257, 181, 22, 8],
      [18, 299, 180, 13, 10], [3, 312, 181, 26, 8], [18, 286, 199, 13, 13], [3, 296, 201, 18, 9],
      [18, 360, 180, 13, 10], [3, 373, 181, 26, 8], [18, 417, 179, 13, 10], [18, 422, 201, 13, 10],
      [3, 433, 180, 20, 8], [3, 338, 201, 31, 9], [18, 375, 221, 13, 9], [3, 393, 201, 22, 8], [3, 385, 222, 22, 8],
      [3, 431, 203, 22, 8], [3, 431, 222, 22, 8], [18, 310, 241, 13, 10], [3, 334, 222, 28, 8], [3, 320, 242, 26, 8],
      [18, 360, 241, 13, 10], [3, 373, 242, 33, 8], [18, 424, 246, 12, 10], [3, 440, 242, 14, 8],
      [18, 297, 263, 14, 10], [3, 313, 263, 44, 9], [18, 359, 263, 14, 11], [3, 375, 263, 24, 9], [18, 407, 263, 12, 10], [3, 420, 263, 36, 9],
    ],
  },
  {
    name: "Screenshot-2025-01-11-194351_jpg.rf.fa71", Pic: P11,
    boxes: [[3, 0, 151, 51, 30], [37, 0, 186, 480, 97]],
  },
  {
    name: "Screenshot-2025-01-09-at-1", Pic: P12,
    boxes: [
      [5, 190, 60, 173, 24], [10, 190, 107, 14, 234], [3, 193, 112, 5, 26], [37, 210, 112, 10, 58],
      ...row(16, [111, 170, 228, 286], 359, 4, 40),
      ...row(3, [130, 188, 246, 305], 349, 6, 8),
      ...row(3, [128, 186, 244, 302], 301, 6, 8),
      ...row(3, [128, 186, 244, 302], 256, 6, 8),
      ...row(3, [132, 190, 248, 306], 345, 6, 8),
      ...row(26, [160, 219, 277], 318, 6, 6), ...row(26, [160, 219, 277], 230, 6, 6), [26, 275, 277, 6, 6],
      [12, 193, 296, 10, 6], [3, 193, 310, 8, 6], [15, 210, 305, 10, 36], [3, 191, 320, 9, 21], [26, 213, 311, 6, 4],
      ...row(27, [113, 172, 230, 288], 227, 26, 53), ...row(27, [113, 172, 230, 288], 272, 26, 53), ...row(27, [113, 172, 230, 288], 316, 26, 53),
      [26, 275, 160, 6, 6], [26, 275, 219, 6, 6], [26, 230, 335, 6, 6], [26, 274, 335, 6, 6], [26, 319, 335, 6, 6],
      [3, 261, 306, 4, 17],
    ],
  },
  {
    name: "content_04_png.rf.0f36535c8f40b926d92c0e", Pic: P13,
    boxes: [
      [16, 91, 9, 248, 437], [37, 252, 155, 27, 220], [37, 219, 156, 28, 218], [18, 178, 295, 12, 22],
      [15, 173, 317, 27, 55], [3, 111, 78, 9, 112], [3, 109, 190, 13, 185], [3, 136, 232, 10, 45], [3, 135, 300, 14, 75],
      [3, 179, 132, 12, 85], [3, 182, 225, 9, 68], [3, 180, 329, 14, 33], [3, 288, 235, 20, 142],
    ],
  },
  {
    name: "Stepper-2-_png.rf.e085ffdf55043f652570ac", Pic: P14,
    boxes: [
      [34, 184, 22, 191, 373], [3, 210, 109, 5, 22], [38, 228, 37, 41, 345], [15, 206, 209, 13, 170], [3, 210, 280, 5, 28],
      [3, 326, 35, 7, 29], [3, 313, 35, 6, 27], [3, 299, 36, 7, 158], [35, 279, 36, 5, 14], [3, 281, 52, 7, 76],
      [3, 359, 43, 6, 37], [22, 360, 103, 5, 58], [3, 359, 194, 7, 39], [22, 360, 253, 5, 58], [3, 359, 345, 7, 39],
    ],
  },
  {
    name: "Screenshot-2025-01-11-190443_jpg.rf.c762", Pic: P15,
    boxes: [
      [16, 194, 316, 80, 164], [16, 194, 101, 80, 219], [16, 194, 0, 80, 107], [3, 227, 0, 6, 3],
      [26, 207, 66, 8, 6], [26, 207, 38, 8, 6], [3, 208, 78, 8, 6], [3, 208, 48, 8, 8],
      [3, 207, 126, 7, 41], [3, 227, 111, 16, 177], [3, 253, 126, 9, 48],
      [11, 205, 111, 13, 12], [27, 252, 114, 10, 8], [3, 208, 288, 8, 6],
      [26, 207, 285, 8, 5], [26, 207, 250, 6, 6],
      [3, 208, 341, 7, 34], [3, 227, 326, 16, 154], [3, 254, 340, 7, 45],
      [11, 204, 326, 14, 13], [27, 251, 326, 11, 12], [26, 209, 465, 6, 8],
    ],
  },
  {
    name: "AracKiralama-2-_png.rf.889c", Pic: P16,
    boxes: [
      [37, 28, 370, 385, 71], [37, 28, 231, 387, 74], [18, 30, 329, 26, 24],
      [3, 69, 329, 235, 21], [19, 28, 142, 187, 73], [19, 224, 141, 191, 74], [15, 28, 59, 385, 59],
      [3, 199, 79, 39, 18], [13, 28, 0, 404, 37], [26, 41, 0, 33, 24], [26, 148, 0, 33, 26], [26, 260, 0, 29, 24], [26, 366, 1, 30, 24],
    ],
  },
];

function Annotation({ box, index }: { box: Box; index: number }) {
  const [cls, x, y, w, h] = box;
  const k = cls % 20;
  const wide = cls > 9;
  const maxX = index % 4 === 3 ? (wide ? 436 : 457) : TILE;
  const inside = index < 4 && y < 35;
  const solid = w < 9 || h < 9;
  return (
    <>
      <div
        className={`absolute ${solid ? FILL[k] : `border-4 ${LINE[k]}`}`}
        style={{ left: pct(x), top: pct(y), width: pct(w), height: pct(h) }}
      />
      <div
        className={`absolute h-[37px] text-[38px] leading-[44px] whitespace-nowrap ${wide ? "w-[44px]" : "w-[23px]"} ${FILL[k]} ${k === 2 ? "text-[#681f11]" : "text-white"}`}
        style={{ left: pct(Math.min(x, maxX)), top: inside ? pct(y) : `calc(${pct(y)} - 35px)` }}
      >
        {cls}
      </div>
    </>
  );
}

export default function App() {
  return (
    <main className="grid w-full overflow-hidden bg-white font-['Liberation_Sans',Arial,sans-serif]">
      <div className="col-start-1 row-start-1 grid grid-cols-4">
        {TILES.map(({ Pic }, i) => (
          <section key={i} className="aspect-square min-w-0 overflow-hidden bg-white">
            <Pic />
          </section>
        ))}
      </div>
      <div className="col-start-1 row-start-1 grid grid-cols-4">
        {TILES.map(({ name, boxes }, i) => (
          <section key={i} className="relative aspect-square min-w-0">
            <div className="absolute inset-0 border-t-2 border-r border-b border-l-2 border-white" />
            <h2 className="pt-[5px] pl-[5px] text-[38px] leading-[44px] whitespace-nowrap text-[#dcdcdc]">{name}</h2>
            {boxes.map((b, n) => (
              <Annotation key={n} box={b} index={i} />
            ))}
          </section>
        ))}
      </div>
    </main>
  );
}
